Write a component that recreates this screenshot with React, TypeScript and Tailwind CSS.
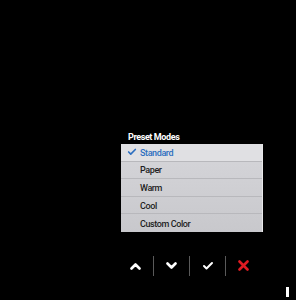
import { Check } from "lucide-react";

const modes = ["Standard", "Paper", "Warm", "Cool", "Custom Color"];

function Chevron({ up }: { up?: boolean }) {
  return (
    <svg width="11" height="8" viewBox="0 0 11 8" className="block">
      <path
        d={up ? "M1.5 6.5 L5.5 2.5 L9.5 6.5" : "M1.5 1.5 L5.5 5.5 L9.5 1.5"}
        fill="none"
        stroke="#ffffff"
        strokeWidth="2.6"
        strokeLinecap="round"
        strokeLinejoin="round"
      />
    </svg>
  );
}

export default function App() {
  return (
    <div className="w-[296px] h-[300px] bg-black flex flex-col font-['Roboto',sans-serif] overflow-hidden">
      <div className="pt-[131px] pl-[121px]">
        <p className="pl-[7px] text-[9px] font-bold text-white leading-[12px] tracking-[-0.4px]">
          Preset Modes
        </p>
        <div className="mt-[1px] w-[142px] border-r border-[#e8e8ea] bg-gradient-to-b from-[#d6d6da] to-[#c8c8cc]">
          {modes.map((m, i) => (
            <div
              key={m}
              className={`h-[17.6px] flex items-center border-b border-[#b8b8bc] last:border-b-0 ${
                i === 0 ? "bg-[#e0e0e3]" : ""
              }`}
            >
              <div className="w-[19px] flex justify-end pr-[3px]">
                {i === 0 && <Check className="w-[10px] h-[10px] text-[#2d6fc0]" strokeWidth={4} />}
              </div>
              <span
                className={`text-[9px] font-medium leading-none tracking-[-0.4px] pt-[2px] ${
                  i === 0 ? "text-[#2d6fc0]" : "text-[#1e1e22]"
                }`}
              >
                {m}
              </span>
            </div>
          ))}
        </div>
      </div>
      <div className="mt-[24px] ml-[118px] flex items-center h-[20px]">
        <div className="w-[35px] flex justify-center">
          <Chevron up />
        </div>
        <div className="w-px h-[20px] bg-[#5a5a5a]" />
        <div className="w-[35px] flex justify-center">
          <Chevron />
        </div>
        <div className="w-px h-[20px] bg-[#5a5a5a]" />
        <div className="w-[35px] flex justify-center">
          <Check className="w-[12px] h-[12px] text-white" strokeWidth={4} />
        </div>
        <div className="w-px h-[20px] bg-[#5a5a5a]" />
        <div className="w-[35px] flex justify-center">
          <svg width="11" height="11" viewBox="0 0 11 11">
            <path d="M1.5 1.5 L9.5 9.5 M9.5 1.5 L1.5 9.5" stroke="#e01b22" strokeWidth="2.6" strokeLinecap="round" />
          </svg>
        </div>
      </div>
      <div className="mt-[11px] ml-[286px] w-[3px] h-[10px] bg-white" />
    </div>
  );
}
